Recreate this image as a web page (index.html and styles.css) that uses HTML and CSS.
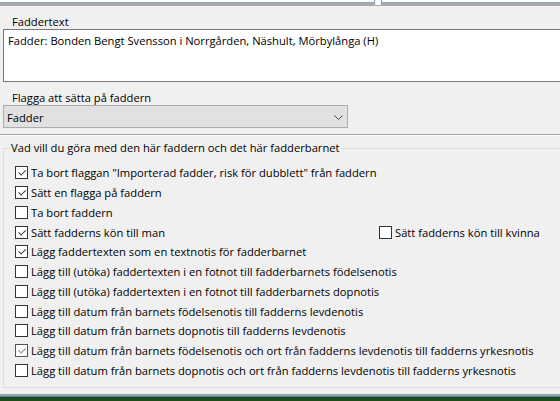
FILE: index.html
```html
<!DOCTYPE html>
<html lang="sv">
<head>
<meta charset="utf-8">
<title>Fadder</title>
<link rel="stylesheet" href="styles.css">
</head>
<body>
<div class="window">
  <div class="topbar">
    <div class="tab tab-left"></div>
    <div class="notch"></div>
    <div class="tab tab-right"></div>
  </div>

  <div class="label label-first">Faddertext</div>
  <div class="textbox">Fadder: Bonden Bengt Svensson i Norrgården, Näshult, Mörbylånga (H)</div>

  <div class="label label-second">Flagga att sätta på faddern</div>
  <div class="select">
    <span>Fadder</span>
    <svg class="chevron" width="9" height="5" viewBox="0 0 9 5"><path d="M0.5 0.5 L4.5 4.5 L8.5 0.5" fill="none" stroke="#444" stroke-width="1"/></svg>
  </div>

  <div class="separator"></div>

  <fieldset class="group">
    <legend>Vad vill du göra med den här faddern och det här fadderbarnet</legend>
    <div class="row"><span class="cb checked"></span><span>Ta bort flaggan "Importerad fadder, risk för dubblett" från faddern</span></div>
    <div class="row"><span class="cb checked"></span><span>Sätt en flagga på faddern</span></div>
    <div class="row"><span class="cb"></span><span>Ta bort faddern</span></div>
    <div class="row">
      <div class="col"><span class="cb checked"></span><span>Sätt fadderns kön till man</span></div>
      <div class="col"><span class="cb"></span><span>Sätt fadderns kön till kvinna</span></div>
    </div>
    <div class="row"><span class="cb checked"></span><span>Lägg faddertexten som en textnotis för fadderbarnet</span></div>
    <div class="row"><span class="cb"></span><span>Lägg till (utöka) faddertexten i en fotnot till fadderbarnets födelsenotis</span></div>
    <div class="row"><span class="cb"></span><span>Lägg till (utöka) faddertexten i en fotnot till fadderbarnets dopnotis</span></div>
    <div class="row"><span class="cb"></span><span>Lägg till datum från barnets födelsenotis till fadderns levdenotis</span></div>
    <div class="row"><span class="cb"></span><span>Lägg till datum från barnets dopnotis till fadderns levdenotis</span></div>
    <div class="row"><span class="cb checked dim"></span><span>Lägg till datum från barnets födelsenotis och ort från fadderns levdenotis till fadderns yrkesnotis</span></div>
    <div class="row"><span class="cb"></span><span>Lägg till datum från barnets dopnotis och ort från fadderns levdenotis till fadderns yrkesnotis</span></div>
  </fieldset>
</div>
<div class="taskbar-edge"></div>
<div class="desktop"></div>
</body>
</html>
```
FILE: styles.css
```css
html, body {
  margin: 0;
  padding: 0;
  width: 560px;
  height: 401px;
  overflow: hidden;
  background: #f0f0f0;
  font-family: "Open Sans", "Noto Sans", sans-serif;
  font-size: 11.2px;
  color: #000;
}

.window {
  height: 394px;
  background: #f0f0f0;
  overflow: hidden;
}

.topbar {
  display: flex;
  height: 7px;
  background: linear-gradient(#f0f0f0 0 3px, #a9a9a9 3px 6px, #f0f0f0 6px);
}
.tab {
  height: 2px;
  background: #fff;
  border-bottom: 1px solid #8aa6c6;
}
.tab-left {
  width: 374px;
  border-right: 1px solid #8aa6c6;
}
.tab-right {
  flex: 1;
  border-left: 1px solid #8aa6c6;
}
.notch {
  width: 6px;
  height: 5px;
  background: linear-gradient(90deg, #f0f0f0 0 1px, #fff 1px 5px, #f0f0f0 5px);
}

.label {
  line-height: 15px;
  padding-left: 12px;
}
.label-first { margin-top: 7px; }
.label-second { margin-top: 8px; }

.textbox {
  margin-left: 3px;
  margin-right: -10px;
  height: 45px;
  border: 1px solid #7a7a7a;
  background: #fff;
  padding: 3px 4px;
  line-height: 15px;
}

.select {
  margin-left: 3px;
  width: 336px;
  height: 21px;
  border: 1px solid #adadad;
  background: #e1e1e1;
  display: flex;
  align-items: center;
  justify-content: space-between;
  padding: 0 4px 0 3px;
  line-height: 15px;
}
.select span { padding-top: 1px; }
.chevron { margin-top: 1px; }

.separator {
  margin-top: 6px;
  height: 1px;
  background: #a0a0a0;
  border-bottom: 1px solid #fff;
}

.group {
  margin: 5px -10px 0 3px;
  padding: 8px 0 7px 11px;
  border: 1px solid #dcdcdc;
  min-width: 0;
}
.group legend {
  margin-left: -5px;
  padding: 0 1px;
  line-height: 14px;
}

.row {
  display: flex;
  align-items: center;
  height: 19.75px;
  line-height: 15px;
}
.col {
  display: flex;
  align-items: center;
}
.col:first-child {
  width: 364px;
}

.cb {
  width: 11px;
  height: 11px;
  border: 1px solid #333;
  background: #fff;
  margin-right: 3px;
  flex: none;
  position: relative;
}
.cb.checked::after {
  content: "";
  position: absolute;
  left: 2px;
  top: 1px;
  width: 6px;
  height: 3px;
  border-left: 1px solid #333;
  border-bottom: 1px solid #333;
  transform: translate(0, 1px) rotate(-45deg) translate(0, 1px);
  transform-origin: 50% 50%;
}
.cb.dim { border-color: #555; }
.cb.dim::after { border-color: #888; }

.taskbar-edge {
  height: 2px;
  background: #a0a0a0;
  border-bottom: 1px solid #3b8da0;
}
.desktop {
  height: 10px;
  background: #1f4a1c;
}
```
